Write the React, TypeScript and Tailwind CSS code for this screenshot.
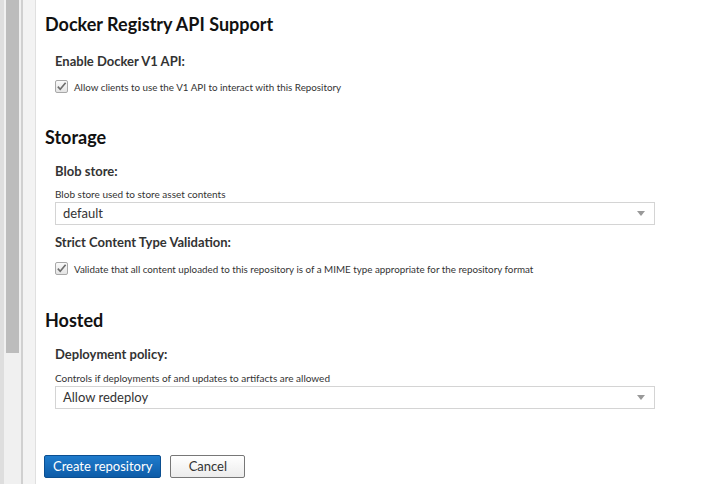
import React from 'react';

const font = { fontFamily: 'Lato, "Liberation Sans", sans-serif' };

const SectionTitle: React.FC<{ title: string }> = ({ title }) => (
  <h2 className="text-[18px] leading-[20px] font-bold text-[#111]">{title}</h2>
);

const FieldLabel: React.FC<{ text: string }> = ({ text }) => (
  <div className="text-[13px] leading-[16px] font-bold text-[#333]">{text}</div>
);

const Hint: React.FC<{ text: string }> = ({ text }) => (
  <div className="text-[10px] leading-[11px] text-[#333]">{text}</div>
);

const CheckRow: React.FC<{ text: string }> = ({ text }) => (
  <label className="flex items-center gap-[6px] text-[9.8px] leading-[12px] text-[#333]">
    <span className="w-[13px] h-[13px] border border-[#a8a8a8] rounded-[2px] bg-gradient-to-b from-[#fafafa] to-[#e4e4e4] flex items-center justify-center">
      <svg viewBox="0 0 12 12" className="w-[11px] h-[11px]">
        <path d="M2 6.2 L4.6 9 L10.5 1.8" fill="none" stroke="#6e6e6e" strokeWidth="1.8" />
      </svg>
    </span>
    <span>{text}</span>
  </label>
);

const SelectBox: React.FC<{ value: string }> = ({ value }) => (
  <div className="w-[600px] h-[23px] border border-[#d4d4d4] bg-white flex items-center justify-between pl-[7px] pr-[9px]">
    <span className="text-[13px] text-[#333]">{value}</span>
    <svg viewBox="0 0 8 5" className="w-[8px] h-[5px]">
      <path d="M0 0 H8 L4 5 Z" fill="#999" />
    </svg>
  </div>
);

export default function App() {
  return (
    <div className="flex w-[712px] h-[484px] overflow-hidden bg-white" style={font}>
      {/* left chrome */}
      <div className="w-[4px] bg-[#dedede]" />
      <div className="w-[2px] bg-[#f0f0f0]" />
      <div className="w-[13px] bg-[#f0f0f0] flex flex-col">
        <div className="h-[353px] bg-[#bcbcbc]" />
      </div>
      <div className="w-[2px] bg-[#f0f0f0]" />
      <div className="w-[2px] bg-[#d0d0d0]" />
      <div className="w-[12px] bg-[#f3f3f3]" />
      <div className="w-[1px] bg-[#e0e0e0]" />

      <main className="flex-1 pl-[9px] pt-[14px]">
        <SectionTitle title="Docker Registry API Support" />
        <div className="pl-[10px]">
          <div className="mt-[19px]"><FieldLabel text="Enable Docker V1 API:" /></div>
          <div className="mt-[11px]"><CheckRow text="Allow clients to use the V1 API to interact with this Repository" /></div>
        </div>

        <div className="mt-[34px]"><SectionTitle title="Storage" /></div>
        <div className="pl-[10px]">
          <div className="mt-[16px]"><FieldLabel text="Blob store:" /></div>
          <div className="mt-[10px]"><Hint text="Blob store used to store asset contents" /></div>
          <div className="mt-[2px]"><SelectBox value="default" /></div>
          <div className="mt-[9px]"><FieldLabel text="Strict Content Type Validation:" /></div>
          <div className="mt-[12px]">
            <CheckRow text="Validate that all content uploaded to this repository is of a MIME type appropriate for the repository format" />
          </div>
        </div>

        <div className="mt-[35px]"><SectionTitle title="Hosted" /></div>
        <div className="pl-[10px]">
          <div className="mt-[16px]"><FieldLabel text="Deployment policy:" /></div>
          <div className="mt-[11px]"><Hint text="Controls if deployments of and updates to artifacts are allowed" /></div>
          <div className="mt-[2px]"><SelectBox value="Allow redeploy" /></div>
        </div>

        <div className="mt-[46px] -ml-[1px] flex gap-[9px]">
          <button className="h-[23px] px-[8px] text-[13px] text-white rounded-[2px] border border-[#0b4f91] bg-gradient-to-b from-[#1f7bcc] to-[#0d5ca8]">
            Create repository
          </button>
          <button className="h-[23px] w-[75px] text-[13px] text-[#333] rounded-[2px] border border-[#777] bg-gradient-to-b from-white to-[#ececec]">
            Cancel
          </button>
        </div>
      </main>
    </div>
  );
}
